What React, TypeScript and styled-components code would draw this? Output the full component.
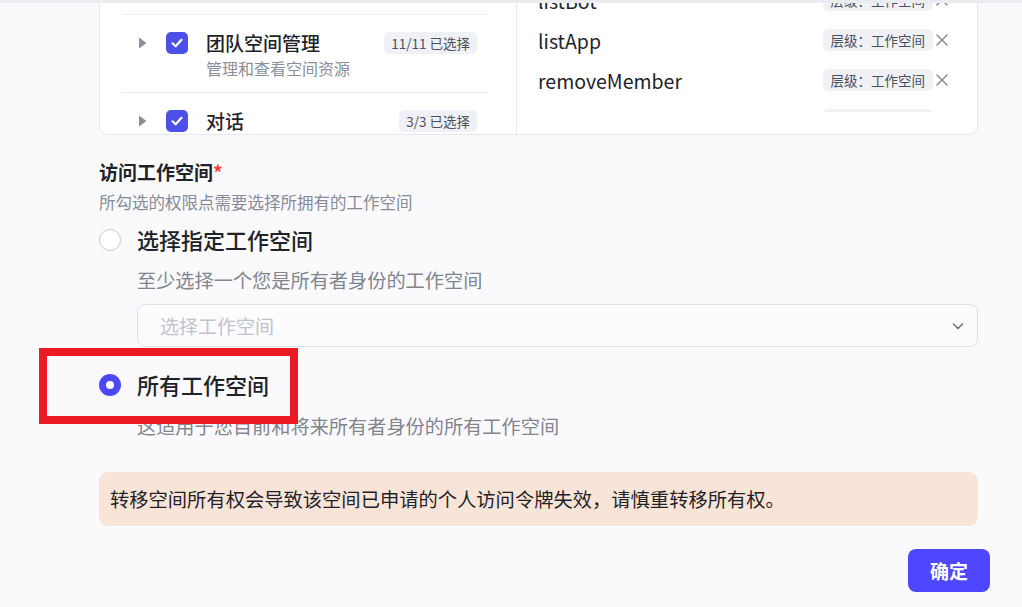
import React from "react";
import styled, { createGlobalStyle } from "styled-components";

const GlobalStyle = createGlobalStyle`
  html, body { margin: 0; padding: 0; }
  body {
    background: #fafafc;
    font-family: "Noto Sans CJK SC", "Noto Sans", sans-serif;
    color: #1f2329;
  }
  * { box-sizing: border-box; }
`;

const Page = styled.div`
  position: relative;
  width: 1022px;
  height: 607px;
  overflow: hidden;
  border-top: 3px solid #ebecf1;
`;

const Content = styled.div`
  padding: 0 44px 0 99px;
  display: flex;
  flex-direction: column;
`;

const Card = styled.div`
  display: grid;
  grid-template-columns: 416px 1fr;
  height: 132px;
  border: 1px solid #e6e7ec;
  border-top: none;
  border-radius: 0 0 9px 9px;
  background: #ffffff;
  overflow: hidden;
`;

const LeftCol = styled.div`
  padding: 11px 28px 0 22px;
  overflow: hidden;
`;

const TreeRow = styled.div`
  display: flex;
  align-items: flex-start;
  padding: 16px 11px 13px 16px;
  border-top: 1px solid #ebecf0;
`;

const CaretBox = styled.div`
  width: 10px;
  height: 24px;
  display: flex;
  align-items: center;
  margin-right: 18px;
  flex: none;
`;

const Checkbox = styled.div`
  width: 22px;
  height: 22px;
  margin-top: 1px;
  border-radius: 5px;
  background: #4d50e6;
  display: flex;
  align-items: center;
  justify-content: center;
  margin-right: 18px;
  flex: none;
`;

const RowBody = styled.div`
  flex: 1;
  display: flex;
  flex-direction: column;
  gap: 2px;
`;

const RowTitle = styled.div`
  font-size: 19px;
  line-height: 24px;
  font-weight: 500;
  color: #1f2329;
`;

const RowSub = styled.div`
  font-size: 16px;
  line-height: 22px;
  color: #8a8f9b;
`;

const Badge = styled.span`
  height: 22px;
  line-height: 22px;
  margin-top: 1px;
  padding: 0 7px;
  border-radius: 5px;
  background: #f0f1f6;
  font-size: 13.5px;
  color: #4b505b;
  white-space: nowrap;
  flex: none;
`;

const RightCol = styled.div`
  border-left: 1px solid #e8e9ee;
  padding: 0 28px 0 21px;
`;

const ScrollArea = styled.div`
  height: 109px;
  overflow: hidden;
`;

const ApiList = styled.div`
  margin-top: -23px;
  display: flex;
  flex-direction: column;
`;

const ApiRow = styled.div`
  height: 40px;
  display: flex;
  align-items: center;
  justify-content: space-between;
`;

const ApiName = styled.span`
  font-size: 19.5px;
  color: #1f2329;
`;

const TagWrap = styled.div`
  display: flex;
  align-items: center;
  gap: 2px;
`;

const Tag = styled.span`
  height: 22px;
  line-height: 22px;
  padding: 0 8px;
  border-radius: 5px;
  background: #f0f1f6;
  font-size: 13.5px;
  color: #4b505b;
`;

const Section = styled.div`
  margin-top: 25px;
  display: flex;
  flex-direction: column;
`;

const Label = styled.div`
  font-size: 19px;
  line-height: 24px;
  font-weight: 600;
  color: #1f2329;
`;

const Star = styled.span`
  color: #f5402e;
`;

const Hint = styled.div`
  margin-top: 8px;
  font-size: 16.5px;
  line-height: 20px;
  color: #868b97;
`;

const Option = styled.div<{ $top: number }>`
  margin-top: ${(p) => p.$top}px;
  display: flex;
  flex-direction: column;
`;

const RadioRow = styled.div`
  display: flex;
  align-items: center;
  gap: 16px;
  height: 28px;
`;

const Radio = styled.div<{ $checked?: boolean }>`
  width: 22px;
  height: 22px;
  border-radius: 50%;
  flex: none;
  ${(p) =>
    p.$checked
      ? `background: #4d48f6; display:flex; align-items:center; justify-content:center;`
      : `background: #ffffff; border: 1px solid #c9cbd3;`}
`;

const Dot = styled.div`
  width: 8px;
  height: 8px;
  border-radius: 50%;
  background: #ffffff;
`;

const RadioLabel = styled.span`
  font-size: 22px;
  line-height: 28px;
  font-weight: 500;
  color: #1f2329;
  margin-top: -3px;
`;

const Indent = styled.div`
  padding-left: 38px;
  display: flex;
  flex-direction: column;
`;

const Desc = styled.div<{ $top: number }>`
  margin-top: ${(p) => p.$top}px;
  font-size: 19.2px;
  line-height: 24px;
  color: #80858f;
`;

const Select = styled.div`
  margin-top: 12px;
  height: 43px;
  border: 1px solid #dfe0e6;
  border-radius: 8px;
  background: #fcfcfe;
  display: flex;
  align-items: center;
  justify-content: space-between;
  padding: 0 12px 0 22px;
`;

const Placeholder = styled.span`
  font-size: 19px;
  color: #c0c3cc;
`;

const Warning = styled.div`
  margin-top: 34px;
  height: 54px;
  border-radius: 9px;
  background: #f9e5d7;
  display: flex;
  align-items: center;
  padding: 0 11px;
  font-size: 19.3px;
  color: #1f2329;
  white-space: nowrap;
`;

const Footer = styled.div`
  margin-top: 23px;
  margin-right: -12px;
  display: flex;
  justify-content: flex-end;
`;

const PrimaryButton = styled.button`
  width: 82px;
  height: 43px;
  border: none;
  border-radius: 8px;
  background: #4f47ff;
  color: #ffffff;
  font-family: inherit;
  font-size: 19px;
  font-weight: 600;
  cursor: pointer;
`;

const Annotation = styled.div`
  position: absolute;
  left: 39px;
  top: 345px;
  width: 259px;
  height: 76px;
  border: 8px solid #eb1b24;
  pointer-events: none;
`;

const Caret = () => (
  <svg width="9" height="12" viewBox="0 0 9 12">
    <path d="M1 0.5 L8.5 6 L1 11.5 Z" fill="#8a8f99" />
  </svg>
);

const Check = () => (
  <svg width="14" height="14" viewBox="0 0 14 14">
    <path d="M2.5 7.3 L5.7 10.3 L11.5 3.8" fill="none" stroke="#fff" strokeWidth="2.2" strokeLinecap="round" strokeLinejoin="round" />
  </svg>
);

const Close = () => (
  <svg width="14" height="14" viewBox="0 0 14 14">
    <path d="M2 2 L12 12 M12 2 L2 12" stroke="#80858f" strokeWidth="1.4" strokeLinecap="round" />
  </svg>
);

const Chevron = () => (
  <svg width="14" height="14" viewBox="0 0 14 14">
    <path d="M2.5 5 L7 9.5 L11.5 5" fill="none" stroke="#6b707b" strokeWidth="1.5" strokeLinecap="round" strokeLinejoin="round" />
  </svg>
);

const treeRows = [
  { title: "团队空间管理", sub: "管理和查看空间资源", badge: "11/11 已选择" },
  { title: "对话", sub: "", badge: "3/3 已选择" },
];

const apis = ["listBot", "listApp", "removeMember", "duplicateTemplate"];

export default function App() {
  return (
    <>
      <GlobalStyle />
      <Page>
        <Content>
          <Card>
            <LeftCol>
              {treeRows.map((r) => (
                <TreeRow key={r.title}>
                  <CaretBox>
                    <Caret />
                  </CaretBox>
                  <Checkbox>
                    <Check />
                  </Checkbox>
                  <RowBody>
                    <RowTitle>{r.title}</RowTitle>
                    {r.sub && <RowSub>{r.sub}</RowSub>}
                  </RowBody>
                  <Badge>{r.badge}</Badge>
                </TreeRow>
              ))}
            </LeftCol>
            <RightCol>
              <ScrollArea>
                <ApiList>
                  {apis.map((a) => (
                    <ApiRow key={a}>
                      <ApiName>{a}</ApiName>
                      <TagWrap>
                        <Tag>层级：工作空间</Tag>
                        <Close />
                      </TagWrap>
                    </ApiRow>
                  ))}
                </ApiList>
              </ScrollArea>
            </RightCol>
          </Card>

          <Section>
            <Label>
              访问工作空间<Star>*</Star>
            </Label>
            <Hint>所勾选的权限点需要选择所拥有的工作空间</Hint>

            <Option $top={14}>
              <RadioRow>
                <Radio />
                <RadioLabel>选择指定工作空间</RadioLabel>
              </RadioRow>
              <Indent>
                <Desc $top={14}>至少选择一个您是所有者身份的工作空间</Desc>
                <Select>
                  <Placeholder>选择工作空间</Placeholder>
                  <Chevron />
                </Select>
              </Indent>
            </Option>

            <Option $top={24}>
              <RadioRow>
                <Radio $checked>
                  <Dot />
                </Radio>
                <RadioLabel>所有工作空间</RadioLabel>
              </RadioRow>
              <Indent>
                <Desc $top={15}>这适用于您目前和将来所有者身份的所有工作空间</Desc>
              </Indent>
            </Option>

            <Warning>转移空间所有权会导致该空间已申请的个人访问令牌失效，请慎重转移所有权。</Warning>

            <Footer>
              <PrimaryButton>确定</PrimaryButton>
            </Footer>
          </Section>
        </Content>
        <Annotation />
      </Page>
    </>
  );
}
